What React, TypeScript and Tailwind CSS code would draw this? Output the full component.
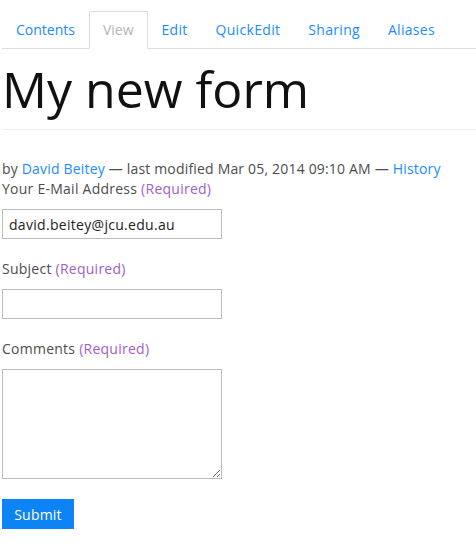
const tabs = [
  { label: 'Contents', track: 'tracking-normal' },
  { label: 'View', track: 'tracking-normal' },
  { label: 'Edit', track: 'tracking-[0.25px]' },
  { label: 'QuickEdit', track: 'tracking-[0.33px]' },
  { label: 'Sharing', track: 'tracking-[0.3px]' },
  { label: 'Aliases', track: 'tracking-[0.3px]' },
];

function Field({ label, children }: { label: string; children: React.ReactNode }) {
  return (
    <div className="mb-5">
      <label className="block text-[14px] leading-5 tracking-[0.25px] text-[#4d4d4d]">
        {label} <span className="text-[#a25ec9]">(Required)</span>
      </label>
      <div className="mt-[10px]">{children}</div>
    </div>
  );
}

export default function App() {
  return (
    <div className="min-h-[550px] bg-white pl-[2px] font-['Open_Sans',sans-serif]">
      <ul className="mt-[11px] flex border-b border-[#ddd]">
        {tabs.map((t) => (
          <li
            key={t.label}
            className={
              t.label === 'View'
                ? `-mb-px border border-[#ddd] border-b-white bg-white px-[13px] py-2 text-[14px] leading-5 ${t.track} text-[#b3b3b3]`
                : `-mb-px border border-transparent px-[13px] py-2 text-[14px] leading-5 ${t.track} text-[#1a8cff]`
            }
          >
            {t.label}
          </li>
        ))}
      </ul>

      <h1 className="mt-[14px] border-b border-[#eee] pb-[13px] text-[50px] font-normal leading-[53px] text-[#111]">
        My new form
      </h1>

      <p className="mt-[29px] text-[14px] leading-5 tracking-[0.18px] text-[#4d4d4d]">
        by <span className="text-[#1a8cff]">David Beitey</span> — last modified Mar 05, 2014 09:10 AM —{' '}
        <span className="text-[#1a8cff]">History</span>
      </p>

      <form>
        <Field label="Your E-Mail Address">
          <input
            className="block h-[30px] w-[220px] border border-[#bbb] px-[6px] text-[14px] tracking-[0.3px] text-[#222] outline-none"
            defaultValue="david.beitey@jcu.edu.au"
          />
        </Field>
        <Field label="Subject">
          <input className="block h-[30px] w-[220px] border border-[#bbb] px-[6px] text-[14px] text-[#222] outline-none" />
        </Field>
        <Field label="Comments">
          <textarea className="block h-[110px] w-[220px] border border-[#bbb] px-[6px] text-[14px] text-[#222] outline-none" />
        </Field>
        <button
          type="button"
          className="h-[30px] w-[72px] bg-[#0d84f5] text-[14px] tracking-[0.2px] text-white"
        >
          Submit
        </button>
      </form>
    </div>
  );
}
